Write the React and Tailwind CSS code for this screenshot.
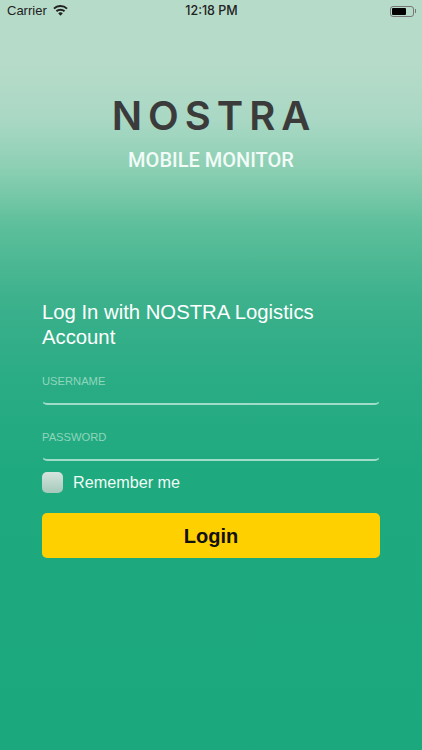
import React from "react";

function Wifi() {
  return (
    <svg width="15" height="11" viewBox="0 0 15 11" className="ml-[6px] mt-[-2px]">
      <path d="M7.5 0C4.7 0 2.2 1.1.3 2.9l1.3 1.4a8.5 8.5 0 0 1 11.8 0l1.3-1.4A10.4 10.4 0 0 0 7.5 0z" fill="#222" />
      <path d="M7.5 3.7c-1.8 0-3.5.7-4.7 1.9l1.3 1.4a4.9 4.9 0 0 1 6.8 0l1.3-1.4a6.8 6.8 0 0 0-4.7-1.9z" fill="#222" />
      <path d="M7.5 7.3c-.9 0-1.7.3-2.3.9l2.3 2.6 2.3-2.6c-.6-.6-1.4-.9-2.3-.9z" fill="#222" />
    </svg>
  );
}

function Field({ label }) {
  return (
    <div className="h-[56px] flex flex-col justify-end">
      <div className="text-[11.2px] leading-[14px] text-[#8fd6bc] pb-[12px]">{label}</div>
      <div className="h-[5px] border-b-2 border-l border-r border-[#a0dcc8] rounded-b-[5px] border-l-transparent border-r-transparent" />
    </div>
  );
}

export default function App() {
  return (
    <div
      className="w-[422px] h-[750px] overflow-hidden flex flex-col bg-[linear-gradient(180deg,#b7dbc9_0px,#b7dbc9_60px,#a9d8c4_120px,#8bcfb3_170px,#5dbf9b_225px,#3cb18c_300px,#2aac84_380px,#1ea97e_480px,#1ca87d_750px)]"
      style={{ fontFamily: '"Liberation Sans", Arial, sans-serif' }}
    >
      <div className="h-[22px] flex items-center justify-between pl-[7px] pr-[6px] text-[13px] text-[#222]">
        <div className="flex items-center w-[120px]">
          <span>Carrier</span>
          <Wifi />
        </div>
        <span className="font-medium text-[12.5px]" style={{ fontFamily: "Inter, sans-serif" }}>12:18 PM</span>
        <div className="flex items-center justify-end w-[120px]">
          <div className="w-[24px] h-[11px] border border-[#777] rounded-[3px] p-[1px]">
            <div className="w-[14px] h-full bg-black rounded-[1px]" />
          </div>
          <div className="w-[1px] h-[4px] bg-[#777] ml-[1px]" />
        </div>
      </div>

      <div className="mt-[69px] flex flex-col items-center">
        <div
          className="text-[40px] leading-[50px] font-semibold tracking-[6px] pl-[6px] text-[#3b3b3b]"
          style={{ fontFamily: "Inter, sans-serif" }}
        >
          NOSTRA
        </div>
        <div
          className="mt-[7px] text-[20px] leading-[24px] font-medium text-[#f2fbf7]"
          style={{ fontFamily: "Roboto, sans-serif" }}
        >
          MOBILE MONITOR
        </div>
      </div>

      <div className="px-[42px] mt-[128px]">
        <div className="text-[20.3px] leading-[25px] text-white">Log In with NOSTRA Logistics Account</div>
        <div className="mt-[-1px]">
          <Field label="USERNAME" />
          <Field label="PASSWORD" />
        </div>
        <div className="flex items-center mt-[11px]">
          <div className="w-[21px] h-[21px] rounded-[5px] bg-[linear-gradient(180deg,#d5e4de,#a5c9bb)]" />
          <span className="ml-[10px] text-[16.2px] leading-[21px] text-[#eefaf5]">Remember me</span>
        </div>
        <button className="mt-[20px] w-full h-[45px] rounded-[5px] bg-[#ffd000] text-[20px] font-bold text-[#111]">
          Login
        </button>
      </div>
    </div>
  );
}
